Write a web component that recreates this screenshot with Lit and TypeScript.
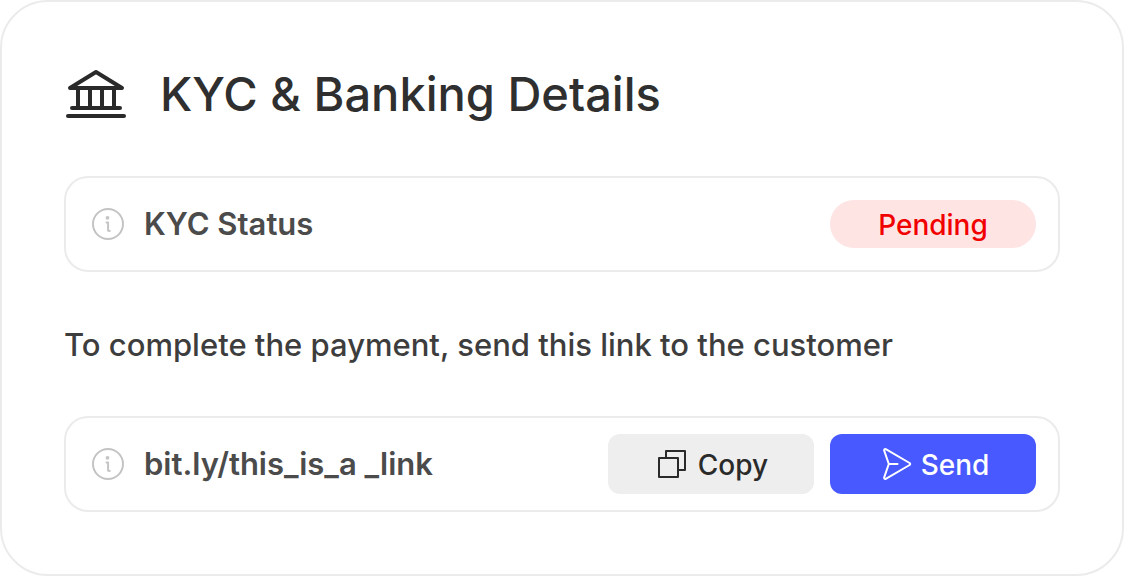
import { LitElement, html, css } from "lit";
import { customElement } from "lit/decorators.js";

const infoIcon = html`<svg class="info" viewBox="0 0 32 32" aria-hidden="true">
  <circle cx="16" cy="16" r="15" />
  <path d="M14.500 14.500h1.600v8.200M16.100 21.600q.2 1.400 1.700 1.400" />
  <circle class="dot" cx="15.500" cy="9.800" r="1.900" />
</svg>`;

@customElement("app-root")
export class AppRoot extends LitElement {
  static styles = css`
    :host {
      display: block;
      font-family: Inter, sans-serif;
      background: #fff;
    }
    * {
      box-sizing: border-box;
    }
    .card {
      padding: 62px;
      border: 2px solid #ebebeb;
      border-radius: 48px;
    }
    .head {
      display: flex;
      align-items: center;
      gap: 32px;
      margin-bottom: 52px;
    }
    h2 {
      margin: 0;
      font-size: 47px;
      line-height: 60px;
      font-weight: 500;
      color: #2f2f2f;
    }
    svg {
      fill: none;
      stroke: currentColor;
      stroke-linecap: round;
      stroke-linejoin: round;
      stroke-width: 2;
      flex: none;
    }
    .bank {
      width: 64px;
      height: 60px;
      color: #2a2a2a;
      stroke-width: 4;
    }
    .row {
      display: flex;
      align-items: center;
      gap: 16px;
      min-height: 96px;
      padding: 16px 22px 16px 26px;
      border: 2px solid #ebebeb;
      border-radius: 24px;
    }
    .label {
      display: flex;
      flex: 1;
      align-items: center;
      gap: 20px;
      font-size: 31px;
      line-height: 48px;
      font-weight: 600;
      color: #4b4b4b;
    }
    a {
      color: inherit;
      text-decoration: none;
    }
    .info {
      width: 32px;
      height: 32px;
      color: #c4c4c4;
    }
    .dot {
      fill: currentColor;
      stroke: none;
    }
    .note {
      margin: 0;
      padding: 49px 0 47px;
      font-size: 31px;
      line-height: 48px;
      font-weight: 500;
      color: #3d3d3d;
    }
    .badge,
    button {
      width: 206px;
      padding: 2px 0 0;
      font: 500 28px/46px Inter, sans-serif;
      text-align: center;
    }
    .badge {
      border-radius: 24px;
      background: #ffe4e4;
      color: #f10000;
    }
    button {
      display: flex;
      align-items: center;
      justify-content: center;
      gap: 12px;
      height: 60px;
      padding-left: 4px;
      border: 0;
      border-radius: 12px;
      background: #eeeeee;
      color: #2a2a2a;
      cursor: pointer;
    }
    button svg {
      margin-bottom: 2px;
    }
    button.primary {
      gap: 8px;
      background: #4759ff;
      color: #fff;
    }
    .copy {
      width: 28px;
      height: 28px;
    }
    .send {
      width: 32px;
      height: 32px;
    }
  `;

  render() {
    return html`
      <section class="card">
        <header class="head">
          <svg class="bank" viewBox="0 0 64 60" aria-hidden="true">
            <path d="M6 24 32 8l26 16ZM14 24v20M26 24v20M38 24v20M50 24v20M8 44h48M4 52h56" />
          </svg>
          <h2>KYC &amp; Banking Details</h2>
        </header>
        <div class="row">
          <div class="label">${infoIcon}<span>KYC Status</span></div>
          <span class="badge">Pending</span>
        </div>
        <p class="note">To complete the payment, send this link to the customer</p>
        <div class="row">
          <div class="label">${infoIcon}<a href="https://bit.ly/this_is_a%20_link">bit.ly/this_is_a _link</a></div>
          <button type="button">
            <svg class="copy" viewBox="0 0 28 28" aria-hidden="true">
              <path d="M1 8h19v19H1ZM8 8V1h19v19h-7" />
            </svg>
            Copy
          </button>
          <button type="button" class="primary">
            <svg class="send" viewBox="0 0 32 32" aria-hidden="true">
              <path d="M3.200 2.600 7.800 16 3.200 29.400q-.2 2 1.600 1.400L28.600 17q1.200-1 0-2L4.800 1.200Q3 .6 3.200 2.600ZM7.800 16h8.700" />
            </svg>
            Send
          </button>
        </div>
      </section>
    `;
  }
}
